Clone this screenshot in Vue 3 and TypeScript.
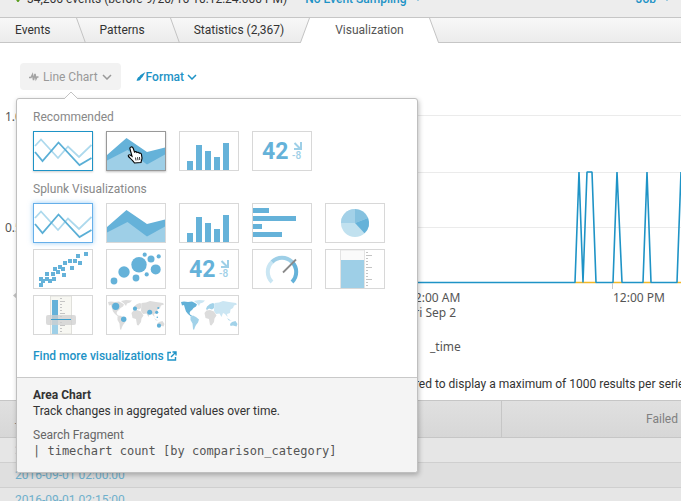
<script setup lang="ts">
type Kind =
  | 'line' | 'area' | 'column' | 'bar' | 'pie' | 'scatter' | 'bubble'
  | 'single' | 'gauge' | 'filler' | 'marker' | 'cluster' | 'choropleth'

interface Viz {
  kind: Kind
  label: string
  state?: 'selected' | 'focused' | 'hovered'
}

const groups: { title: string; items: Viz[] }[] = [
  {
    title: 'Recommended',
    items: [
      { kind: 'line', label: 'Line Chart', state: 'selected' },
      { kind: 'area', label: 'Area Chart', state: 'hovered' },
      { kind: 'column', label: 'Column Chart' },
      { kind: 'single', label: 'Single Value' },
    ],
  },
  {
    title: 'Splunk Visualizations',
    items: [
      { kind: 'line', label: 'Line Chart', state: 'focused' },
      { kind: 'area', label: 'Area Chart' },
      { kind: 'column', label: 'Column Chart' },
      { kind: 'bar', label: 'Bar Chart' },
      { kind: 'pie', label: 'Pie Chart' },
      { kind: 'scatter', label: 'Scatter Chart' },
      { kind: 'bubble', label: 'Bubble Chart' },
      { kind: 'single', label: 'Single Value' },
      { kind: 'gauge', label: 'Radial Gauge' },
      { kind: 'filler', label: 'Filler Gauge' },
      { kind: 'marker', label: 'Marker Gauge' },
      { kind: 'cluster', label: 'Cluster Map' },
      { kind: 'choropleth', label: 'Choropleth Map' },
    ],
  },
]

const columns = [[8, 30], [17, 14], [26, 20], [35, 26], [44, 12]]
const bars = [[5, 16], [13, 43], [21, 9], [29, 29]]
const scatter = [
  [8, 36], [8, 30], [10, 32], [14, 25], [14, 30], [17, 32], [20, 25], [21, 30], [22, 20], [25, 23],
  [27, 18], [30, 20], [31, 26], [32, 14], [37, 12], [39, 19], [42, 12], [45, 7], [47, 14], [53, 5],
]
const bubbles = [
  [8, 32, 3.4], [18, 23, 5.7], [33, 15.7, 7.7], [30, 29, 3.4], [38.7, 5.7, 2.1],
  [45, 10, 3.5], [52.7, 7.4, 2.1], [49.7, 20.4, 5], [40.7, 25.4, 2.1],
]
const clusters = [
  [9.7, 11.3, 3.6], [29, 13.7, 2.1], [17.7, 24.3, 2.7], [43.7, 17.3, 2.5],
  [50.7, 17.3, 1.6], [52.3, 13, 1.1], [51.3, 22.3, 0.8], [53, 30.7, 2.1],
]
const lands = [
  { d: 'M2 7L5 6.5L9 7L13 6.5L16 8L18 9.5L17 11.500L14.500 13L13 15L11.500 16L10.500 18L11.500 20L13 20.500L12 21.500L9 19L7 16.500L6 13.500L5 10L3 10.500Z', fill: '#62b1d8' },
  { d: 'M11.500 21.500L14 20.500L17 22L20 24.500L19 27.500L17 30L16 32L15 35L14 34L13.500 28.500L11.500 25Z', fill: '#a2d2e9' },
  { d: 'M15 6L20 5L26 5.500L24 7.500L21 8.500L20 11L18 8.500Z', fill: '#cbe6f3' },
  { d: 'M27 14L28 11.500L31 9L34 8L35.500 9L35 13L33 14.500L30 13.500L28 15Z', fill: '#a2d2e9' },
  { d: 'M35.500 8L40 7.500L44 6L50 7L57 8L58 9.500L55 10.500L54 13L51.500 14.500L51 18L48 19L48.500 22L46 19L44 18L42.500 22L40.500 18.500L37 19L35 16Z', fill: '#cbe6f3' },
  { d: 'M25.500 18L27.500 15.500L31 15L35 16.500L37.500 20.500L35.500 23.500L35 27L32.500 30.500L31 30L30 24L26.500 23Z', fill: '#dcdcdc' },
  { d: 'M51 29L53 27L56.500 26L58.500 29L57.500 31.500L54 30.500L51.500 31Z M48 23L51 25L53 25L50 25.500Z', fill: '#a2d2e9' },
]
const gaugeTicks = [3, 6, 9, 12, 15, 18, 21, 24, 27, 30, 33, 36]

const gridLines = [25, 82, 137]
const series = 'M0 192.500H165L169 82L173 192.500L177 82H182L186 192.500H203L207 82L212 192.500H233L237 82L241 192.500H267L271 82L275 192.500H330'
const rows = ['2016-09-01 01:45:00', '2016-09-01 02:00:00', '2016-09-01 02:15:00']
</script>

<template>
  <div class="page">
    <header class="status">
      <svg class="check" viewBox="0 0 8 8" aria-hidden="true"><path d="M1 4L3 7L7 1" /></svg>
      <span class="count">34,266 events (before 9/20/16 10:12:24.000 PM)</span>
      <a href="#" class="menu">No Event Sampling <i class="tri"></i></a>
      <a href="#" class="menu job">Job <i class="tri"></i></a>
    </header>

    <nav class="tabs">
      <a href="#" class="tab">Events</a>
      <svg class="edge" viewBox="0 0 10 25" aria-hidden="true"><path d="M.5 0L9.500 25" /></svg>
      <a href="#" class="tab">Patterns</a>
      <svg class="edge" viewBox="0 0 10 25" aria-hidden="true"><path d="M.5 0L9.500 25" /></svg>
      <a href="#" class="tab wide">Statistics (2,367)</a>
      <svg class="edge on" viewBox="0 0 10 25" aria-hidden="true"><path class="bg" d="M9.500 0L.5 24.500V25H10V0Z" /><path d="M9.500 0L.5 24.500H0" /></svg>
      <a href="#" class="tab active">Visualization</a>
      <svg class="edge on" viewBox="0 0 10 25" aria-hidden="true"><path class="bg" d="M0 0H.5L9.500 24.500V25H0Z" /><path d="M.5 0L9.500 24.500H10" /></svg>
    </nav>

    <div class="toolbar">
      <div class="picker">
        <button type="button" class="pick">
          <svg width="10" height="10" viewBox="0 0 10 10" aria-hidden="true"><path d="M0 5.500H2L3.500 2.500L4.500 8L6 2L7 7L8 5H9.500" fill="none" stroke="#a3a3a3" stroke-width="1.500" /></svg>
          <span>Line Chart</span>
          <svg width="10" height="6" viewBox="0 0 10 6" aria-hidden="true"><path d="M1 1L5 5L9 1" fill="none" stroke="#999" stroke-width="1.500" /></svg>
        </button>

        <section class="popup">
          <svg class="arrow" viewBox="0 0 14 8" aria-hidden="true"><path d="M0 8L7 1L14 8" /></svg>
          <div class="choices">
            <template v-for="g in groups" :key="g.title">
              <h3>{{ g.title }}</h3>
              <div class="grid">
                <button v-for="v in g.items" :key="v.kind" type="button" class="thumb" :class="v.state" :aria-label="v.label">
                  <svg viewBox="1 1 58 38" aria-hidden="true">
                    <g v-if="v.kind === 'line'" fill="none" stroke-width="1.800">
                      <path d="M2 15L8 8.500L25 27L35 15.500L46 26L58.500 14" stroke="#add9ed" />
                      <path d="M2 21L9.500 30L25.500 11.500L46.500 34L58.500 27" stroke="#5aafd6" />
                    </g>
                    <g v-else-if="v.kind === 'area'">
                      <path d="M1 24L20.500 7L41 21L59 16.500V39H1Z" fill="#65b2d9" />
                      <path d="M1 29.500L21.500 19L41 33.500L59 23.500V39H1Z" fill="#9ecfe7" />
                    </g>
                    <g v-else-if="v.kind === 'column'" fill="#65b2d9">
                      <rect v-for="c in columns" :key="c[0]" :x="c[0]" :y="c[1]" width="6" :height="39 - c[1]" />
                    </g>
                    <g v-else-if="v.kind === 'bar'" fill="#65b2d9">
                      <rect v-for="b in bars" :key="b[0]" x="1" :y="b[0]" :width="b[1]" height="5" />
                    </g>
                    <g v-else-if="v.kind === 'pie'">
                      <circle cx="30" cy="20" r="14" fill="#c1e1ef" />
                      <path d="M30 20H16A14 14 0 0 1 30 6Z" fill="#a3d1e8" />
                      <path d="M30 20V6A14 14 0 0 1 43 15Z" fill="#85c1df" />
                      <path d="M30 20L43 15A14 14 0 0 1 39.500 30.300Z" fill="#65b2d9" />
                    </g>
                    <g v-else-if="v.kind === 'scatter'" fill="#65b2d9">
                      <rect v-for="(s, i) in scatter" :key="i" :x="s[0] - 2" :y="s[1] - 2" width="4" height="4" />
                    </g>
                    <g v-else-if="v.kind === 'bubble'" fill="#65b2d9">
                      <circle v-for="(b, i) in bubbles" :key="i" :cx="b[0]" :cy="b[1]" :r="b[2]" />
                    </g>
                    <g v-else-if="v.kind === 'single'">
                      <text x="10" y="28" class="big">42</text>
                      <text x="40" y="28" class="small">-8</text>
                      <path d="M42.500 12L48.500 18M49 11V18H42" fill="none" stroke="#9ecfe7" stroke-width="2" />
                    </g>
                    <g v-else-if="v.kind === 'gauge'" fill="none" stroke-width="4">
                      <path d="M20 33A14 14 0 0 1 20 13" stroke="#cae6f3" />
                      <path d="M20 13A14 14 0 0 1 40 13" stroke="#9ecfe7" />
                      <path d="M40 13A14 14 0 0 1 40 33" stroke="#65b2d9" />
                      <path d="M31 23.500L44 10.500" stroke="#8a8a8a" stroke-width="1.800" />
                    </g>
                    <g v-else-if="v.kind === 'filler'">
                      <rect x="15.500" y="1" width="24" height="38" fill="#fafafa" stroke="#e3e3e3" />
                      <rect x="16" y="11" width="23" height="28" fill="#9ecfe7" />
                      <rect v-for="t in gaugeTicks" :key="t" x="41" :y="t" :width="[6, 18, 30].includes(t) ? 6 : 2" height="1" fill="#c4c4c4" />
                    </g>
                    <g v-else-if="v.kind === 'marker'">
                      <path d="M17.500 1H38.500V39H17.500Z" fill="#f7f7f2" stroke="#e0e0db" />
                      <rect x="19" y="5" width="6" height="19" fill="#65b2d9" />
                      <rect x="19" y="24" width="6" height="15" fill="#9ecfe7" />
                      <rect v-for="t in gaugeTicks" :key="t" x="27" :y="t" :width="[6, 18, 30].includes(t) ? 5 : 2" height="1" fill="#c4c4c4" />
                      <rect x="13" y="20" width="30" height="10" rx="2" fill="#cfcfcf" fill-opacity=".75" />
                      <rect x="18" y="24" width="20" height="1" fill="#3d9fcd" />
                    </g>
                    <g v-else-if="v.kind === 'cluster'">
                      <path v-for="l in lands" :key="l.d" :d="l.d" fill="#dcdcdc" />
                      <circle v-for="(c, i) in clusters" :key="i" :cx="c[0]" :cy="c[1]" :r="c[2]" fill="#5fb0d8" />
                    </g>
                    <g v-else>
                      <path v-for="l in lands" :key="l.d" :d="l.d" :fill="l.fill" />
                    </g>
                  </svg>
                  <svg v-if="v.state === 'hovered'" class="hand" viewBox="0 0 16 18" aria-hidden="true">
                    <path d="M4 1C5.200.6 5.800 1.200 6.200 2.200L7.500 6C8.200 5.400 9.500 5.500 9.900 6.500C10.700 6 11.800 6.200 12.200 7.200C13.200 6.900 14.300 7.400 14.500 8.600L15 12C15 13.500 14.300 14.500 14 16.500L7.500 17C6.500 15 3.500 12.500 1.500 10.500C.6 9.500 2 8.300 3.200 9L5 10.200L3 3C2.700 2 3 1.300 4 1Z" fill="#fff" stroke="#000" stroke-width="1.100" />
                    <path d="M8.500 11.500L9 14.500M10.500 11.200L11 14.300M12.500 11L12.800 14" stroke="#000" stroke-width=".8" />
                  </svg>
                </button>
              </div>
            </template>
            <a href="#" class="more">Find more visualizations
              <svg width="10" height="10" viewBox="0 0 10 10" aria-hidden="true"><path d="M4 1.500H1V9H8.500V6M5.500 1H9V4.500M9 1L4 6" fill="none" stroke="#1e93c6" stroke-width="1.400" /></svg>
            </a>
          </div>
          <div class="detail">
            <strong>Area Chart</strong>
            <p>Track changes in aggregated values over time.</p>
            <h4>Search Fragment</h4>
            <code>| timechart count [by comparison_category]</code>
          </div>
        </section>
      </div>

      <a href="#" class="format">
        <svg width="10" height="9" viewBox="0 0 9 9" aria-hidden="true"><path d="M9 0L4 3L2.500 5C1 5 1 7 0 8.500C2 9 4 8.500 4.500 6.500L6 5Z" fill="#1e93c6" /></svg>
        <span>Format</span>
        <svg class="chev" width="10" height="6" viewBox="0 0 10 6" aria-hidden="true"><path d="M1 1L5 5L9 1" fill="none" stroke="#1e93c6" stroke-width="1.500" /></svg>
      </a>
    </div>

    <figure class="chart">
      <svg width="100%" height="275" role="img" aria-label="Events over time">
        <text x="5" y="31">1.0</text>
        <text x="5" y="142">0.5</text>
        <path d="M17 202L13 205.500L17 209Z" fill="#c4c4c4" />
        <rect v-for="y in gridLines" :key="y" x="40" :y="y" width="100%" height="1" fill="#ebebeb" />
        <svg x="410" y="0" width="272" height="275">
          <path d="M165 192.500H186M203 192.500H212M233 192.500H241M267 192.500H272" stroke="#f2b827" stroke-width="1.500" />
          <path :d="series" fill="none" stroke="#1e93c6" stroke-width="1.600" stroke-linejoin="bevel" />
          <rect x="202" y="193" width="1" height="6" fill="#c9c9c9" />
          <text x="-2" y="212">12:00 AM</text>
          <text x="-2" y="227">Fri Sep 2</text>
          <text x="203" y="212">12:00 PM</text>
          <text x="20" y="261">_time</text>
        </svg>
      </svg>
    </figure>

    <p class="notice">These results may be truncated. This visualization is configured to display a maximum of 1000 results per series, and that limit has been reached.</p>

    <table>
      <thead>
        <tr><th class="time">_time</th><th class="num">Failed</th></tr>
      </thead>
      <tbody>
        <tr v-for="r in rows" :key="r"><td><a href="#">{{ r }}</a></td><td></td></tr>
      </tbody>
    </table>
  </div>
</template>

<style>
body { margin: 0; }
</style>

<style scoped>
.page {
  height: 100vh;
  overflow: hidden;
  background: #fff;
  color: #333;
  font: 12px/16px Roboto, "Liberation Sans", sans-serif;
}
a { color: #1e93c6; text-decoration: none; }
button { font: inherit; cursor: pointer; }
svg { display: block; flex: none; }
h3, h4, p, figure { margin: 0; font-size: 12px; font-weight: 400; }

.status {
  display: flex;
  align-items: flex-end;
  box-sizing: border-box;
  height: 18px;
  padding: 0 11px 10px 15px;
  background: #ededed;
  border-bottom: 1px solid #c6c6c6;
  white-space: nowrap;
}
.check { width: 8px; height: 8px; margin: 0 4px 5px 0; }
.check path { fill: none; stroke: #5a9e1f; stroke-width: 2; }
.menu { display: flex; align-items: center; gap: 8px; margin-left: 18px; font-weight: 500; }
.job { margin-left: auto; }
.tri { border: 3px solid transparent; border-top: 4px solid #1e93c6; border-bottom: 0; }

.tabs {
  display: flex;
  height: 25px;
  box-sizing: border-box;
  background: linear-gradient(#f8f8f8, #ebebeb);
  box-shadow: inset 0 -1px #c6c6c6;
}
.tab {
  padding: 4px 25px 0 14px;
  color: #333;
}
.tab:first-child { padding-left: 15px; }
.tab.wide { padding-right: 16px; }
.tab.active { padding-left: 25px; padding-right: 25px; background: #fff; color: #555; }
.edge { width: 10px; height: 25px; fill: none; stroke: #c3c3c3; }
.edge .bg { fill: #fff; stroke: none; }

.toolbar { display: flex; align-items: center; gap: 15px; padding: 20px 20px 0; }
.picker { position: relative; }
.pick {
  display: flex;
  align-items: center;
  gap: 4px;
  height: 27px;
  padding: 0 9px;
  border: 0;
  border-radius: 4px;
  background: #f2f2f2;
  color: #999;
}
.format { display: flex; align-items: center; font-weight: 500; }
.chev { margin-left: 3px; }

.popup {
  position: absolute;
  z-index: 2;
  top: 35px;
  left: -4px;
  width: 400px;
  border: 1px solid #bfbfbf;
  border-radius: 3px;
  background: #fff;
  box-shadow: 1px 2px 5px rgba(0, 0, 0, .25);
}
.arrow { position: absolute; top: -8px; left: 47px; width: 14px; height: 8px; }
.arrow path { fill: #fff; stroke: #c3c3c3; }
.choices { padding: 10px 16px 13px; }
.choices h3 { color: #888; margin-bottom: 6px; }
.grid { display: flex; flex-wrap: wrap; gap: 6px 13px; margin-bottom: 10px; }
.thumb {
  position: relative;
  width: 60px;
  height: 40px;
  padding: 0;
  border: 1px solid #d8d8d8;
  background: #fff;
}
.thumb > svg:first-child { width: 58px; height: 38px; }
.thumb.selected { border-color: #1e93c6; box-shadow: 0 1px 2px rgba(0, 0, 0, .2); }
.thumb.focused { border-color: #66afe9; box-shadow: 0 0 5px rgba(82, 168, 236, .6); }
.thumb.hovered { border-color: #999; box-shadow: 0 1px 2px rgba(0, 0, 0, .25); }
.hand { position: absolute; left: 20px; top: 14px; width: 16px; height: 18px; }
.big { font: 700 23px Roboto, sans-serif; fill: #65b2d9; }
.small { font: 500 10px Roboto, sans-serif; fill: #9ecfe7; }
.more { display: flex; align-items: center; gap: 3px; margin-top: 13px; font-weight: 500; }

.detail {
  padding: 9px 16px 13px;
  border-top: 1px solid #c9c9c9;
  border-radius: 0 0 3px 3px;
  background: #f4f4f4;
}
.detail strong { display: block; }
.detail h4 { margin-top: 8px; color: #666; }
.detail code { display: block; color: #555; font: 12px/16px "DejaVu Sans Mono", monospace; }

.chart text { font: 12px "Noto Sans", sans-serif; fill: #555; }
.notice { padding: 11px 0 8px 94px; white-space: nowrap; }

table { width: 100%; border-collapse: separate; border-spacing: 0; background: #e6e6e6; }
th {
  height: 36px;
  padding: 0 3px 0 15px;
  border: solid #c6c6c6;
  border-width: 1px 0;
  background: linear-gradient(#e0e0e0, #d7d7d7);
  color: #808080;
  font-weight: 400;
  text-align: right;
}
.time { width: 483px; text-align: left; border-right-width: 1px; }
td { height: 24px; padding: 0 15px; border-bottom: 1px solid #cfcfcf; }
td a { color: #6fb0cc; }
tbody tr:nth-child(even) { background: #dfdfdf; }
</style>
